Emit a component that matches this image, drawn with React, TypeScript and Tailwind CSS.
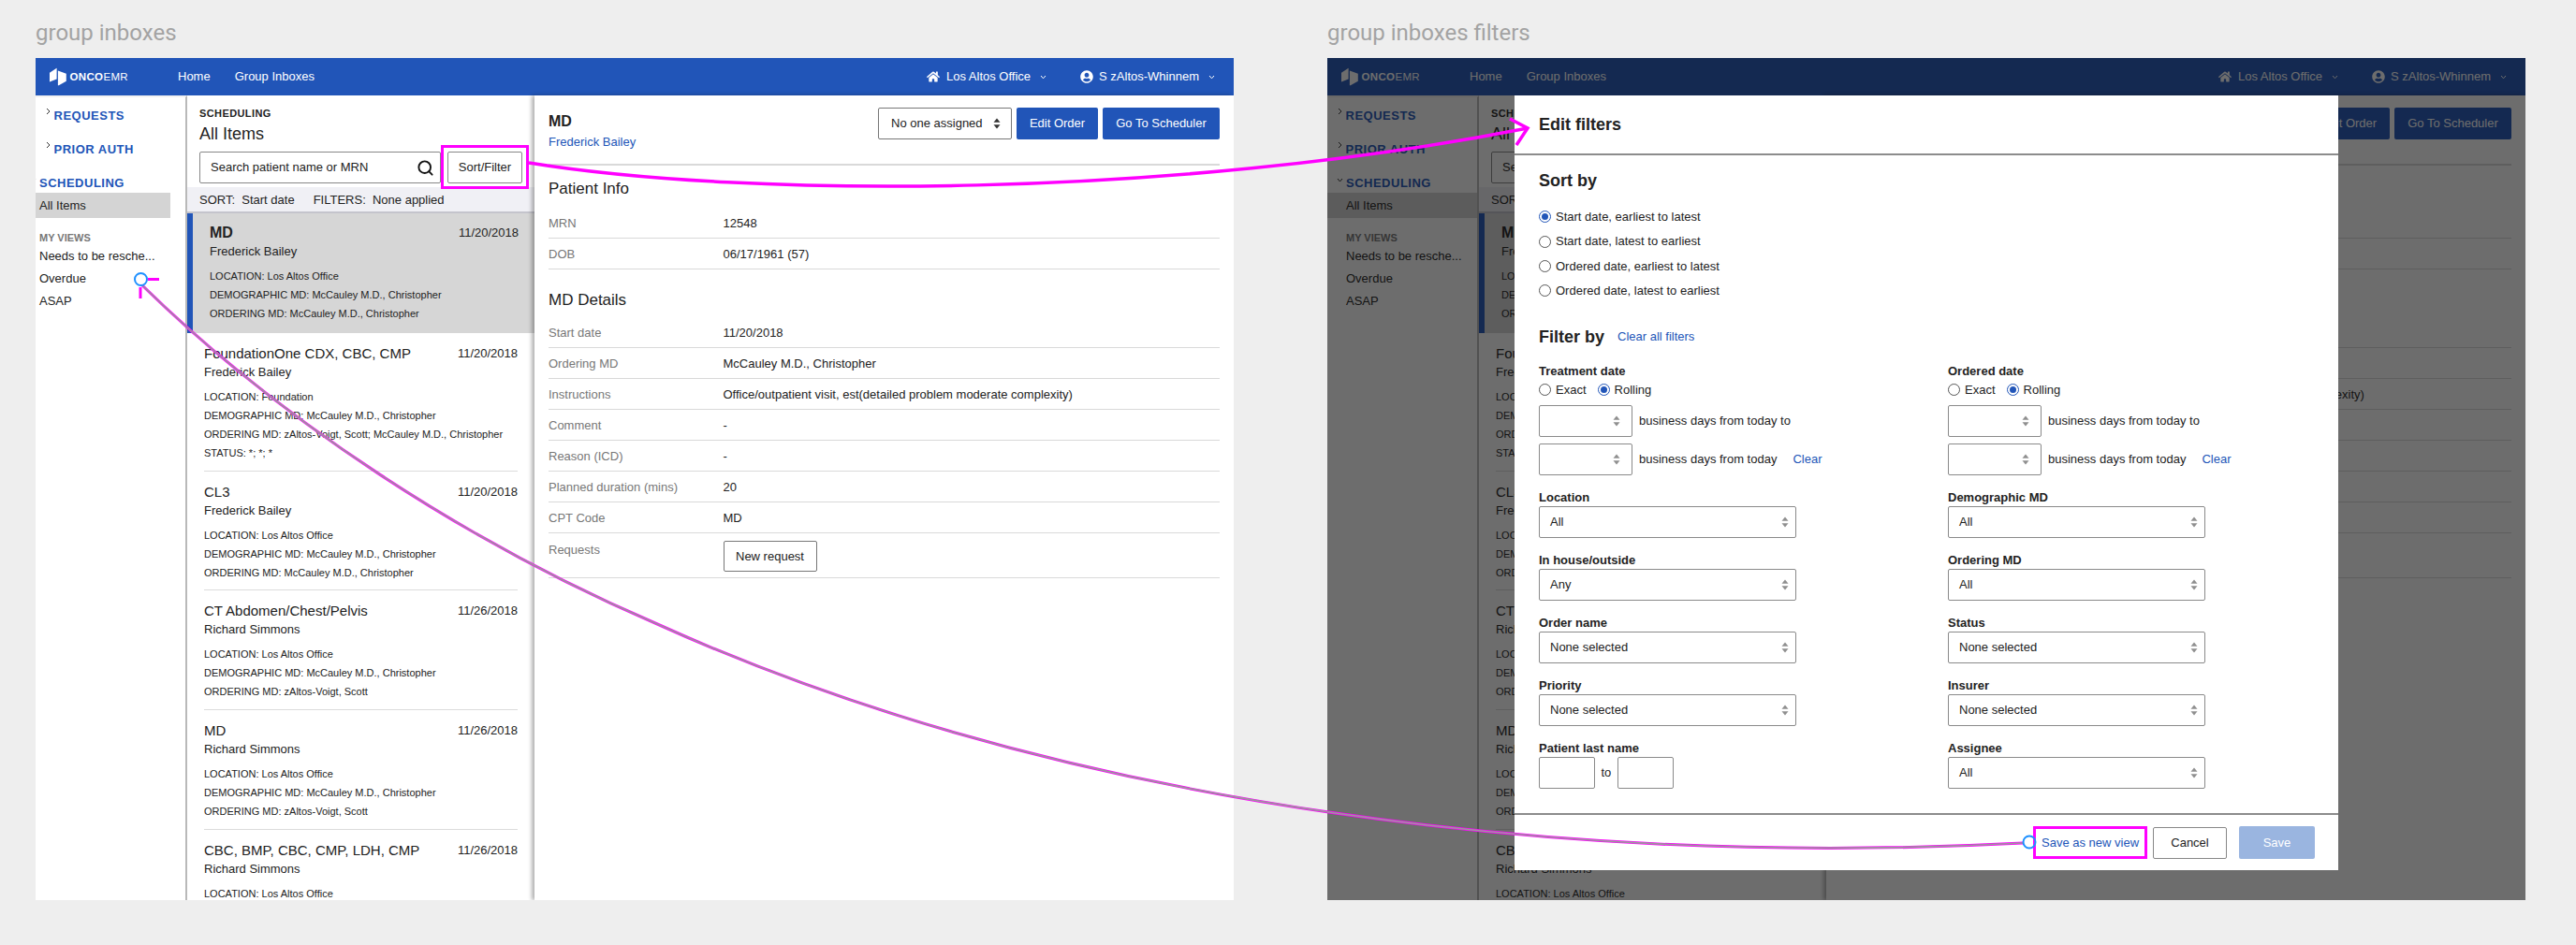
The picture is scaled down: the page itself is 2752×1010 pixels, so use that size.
import React from "react";
import { Search } from "lucide-react";
import { FaHome, FaUserCircle } from "react-icons/fa";

const FONT = "font-['Liberation_Sans',Arial,sans-serif]";

interface Order {
  title: string;
  patient: string;
  date: string;
  lines: string[];
}

const ORDERS: Order[] = [
  {
    title: "MD",
    patient: "Frederick Bailey",
    date: "11/20/2018",
    lines: ["LOCATION: Los Altos Office", "DEMOGRAPHIC MD: McCauley M.D., Christopher", "ORDERING MD: McCauley M.D., Christopher"],
  },
  {
    title: "FoundationOne CDX, CBC, CMP",
    patient: "Frederick Bailey",
    date: "11/20/2018",
    lines: ["LOCATION: Foundation", "DEMOGRAPHIC MD: McCauley M.D., Christopher", "ORDERING MD: zAltos-Voigt, Scott; McCauley M.D., Christopher", "STATUS: *; *; *"],
  },
  {
    title: "CL3",
    patient: "Frederick Bailey",
    date: "11/20/2018",
    lines: ["LOCATION: Los Altos Office", "DEMOGRAPHIC MD: McCauley M.D., Christopher", "ORDERING MD: McCauley M.D., Christopher"],
  },
  {
    title: "CT Abdomen/Chest/Pelvis",
    patient: "Richard Simmons",
    date: "11/26/2018",
    lines: ["LOCATION: Los Altos Office", "DEMOGRAPHIC MD: McCauley M.D., Christopher", "ORDERING MD: zAltos-Voigt, Scott"],
  },
  {
    title: "MD",
    patient: "Richard Simmons",
    date: "11/26/2018",
    lines: ["LOCATION: Los Altos Office", "DEMOGRAPHIC MD: McCauley M.D., Christopher", "ORDERING MD: zAltos-Voigt, Scott"],
  },
  {
    title: "CBC, BMP, CBC, CMP, LDH, CMP",
    patient: "Richard Simmons",
    date: "11/26/2018",
    lines: ["LOCATION: Los Altos Office", "DEMOGRAPHIC MD: McCauley M.D., Christopher", "ORDERING MD: zAltos-Voigt, Scott"],
  },
];

const UpDown = ({ dark = false }: { dark?: boolean }) => (
  <svg width="8" height="12" viewBox="0 0 8 12" className={dark ? "fill-[#333]" : "fill-[#8f8f8f]"}>
    <path d="M4 0.5 L7.5 4.8 H0.5 Z" />
    <path d="M4 11.5 L0.5 7.2 H7.5 Z" />
  </svg>
);

const Caret = () => (
  <svg width="7" height="5" viewBox="0 0 7 5" fill="none" stroke="currentColor" strokeWidth="1">
    <path d="M1 1 L3.5 3.8 L6 1" />
  </svg>
);

const Logo = () => (
  <svg width="18" height="20" viewBox="0 0 18 20" fill="#fff">
    <path d="M0 5.8 L7.6 0.8 V12.5 L0 15.5 Z" />
    <path d="M8.9 3.5 L17.8 6.8 V14.8 L9.8 19.2 H8.9 Z" />
  </svg>
);

const Nav = () => (
  <div className="flex h-[40px] shrink-0 items-center bg-[#2155b8] text-[13px] text-white">
    <div className="ml-[15px] flex w-[137px] items-center gap-[3.5px]">
      <Logo />
      <span className="pt-[1px] text-[11.5px] tracking-[0.35px]">
        <span className="font-bold">ONCO</span>EMR
      </span>
    </div>
    <span>Home</span>
    <span className="ml-[26px]">Group Inboxes</span>
    <div className="ml-auto flex items-center">
      <FaHome className="mr-[7px] text-[14px]" />
      <span>Los Altos Office</span>
      <span className="ml-[10px] mr-[36px]">
        <Caret />
      </span>
      <FaUserCircle className="mr-[6px] text-[14px]" />
      <span>S zAltos-Whinnem</span>
      <span className="ml-[10px] mr-[20px]">
        <Caret />
      </span>
    </div>
  </div>
);

const NavGroup = ({ label, className }: { label: string; className: string }) => (
  <div className={`relative pl-[19.5px] text-[13px] font-bold leading-[20px] tracking-[0.5px] text-[#2155b8] ${className}`}>
    <svg width="5" height="8" viewBox="0 0 5 8" fill="none" stroke="#333" strokeWidth="1" className="absolute left-[11px] top-[1px]">
      <path d="M1 1 L4 4 L1 7" />
    </svg>
    {label}
  </div>
);

const Sidebar = ({ wide }: { wide: boolean }) => {
  const pad = wide ? "pl-[20px]" : "pl-[4px]";
  return (
    <div className="w-[162px] shrink-0 border-r-2 border-[#b9b9b9] border-t-2 border-t-[#f2f2f2] text-[13px] text-[#222]">
      <NavGroup label="REQUESTS" className="mt-[10px]" />
      <NavGroup label="PRIOR AUTH" className="mt-[16px]" />
      <div className={`relative mt-[16px] ${pad} text-[13px] font-bold leading-[20px] tracking-[0.5px] text-[#2155b8]`}>
        <svg
          width="7"
          height="5"
          viewBox="0 0 7 5"
          fill="none"
          stroke="#333"
          strokeWidth="1"
          className={wide ? "absolute left-[10px] top-[4px]" : "absolute left-[-6px] top-[4px]"}
        >
          <path d="M1 1 L3.5 4 L6 1" />
        </svg>
        SCHEDULING
      </div>
      <div className={`flex h-[27px] items-center bg-[#d4d4d4] pt-[1px] ${pad} ${wide ? "w-[160px]" : "w-[144px]"}`}>All Items</div>
      <div className={`mt-[14px] ${pad} text-[11px] font-bold leading-[14px] text-[#777]`}>MY VIEWS</div>
      <div className={`mt-[3px] ${pad} leading-[20px]`}>Needs to be resche...</div>
      <div className={`mt-[4px] ${pad} leading-[20px]`}>Overdue</div>
      <div className={`mt-[4px] ${pad} leading-[20px]`}>ASAP</div>
    </div>
  );
};

const OrderRow = ({ order, selected }: { order: Order; selected: boolean }) => (
  <div className={selected ? "border-l-[6px] border-[#2155b8] bg-[#d6d6d6] pl-[18px] pr-[17px]" : "px-[18px]"}>
    <div className={selected ? "h-[128px] pt-[11px]" : "border-b border-[#dcdcdc] pb-[8.67px] pt-[12px]"}>
      <div className="flex items-center justify-between text-[#222]">
        <span className={selected ? "text-[16px] font-bold leading-[20px]" : "text-[15px] leading-[20px]"}>{order.title}</span>
        <span className="text-[13px] leading-[20px]">{order.date}</span>
      </div>
      <div className="text-[13px] leading-[20px] text-[#222]">{order.patient}</div>
      <div className="mt-[6px] text-[11px] leading-[20px] text-[#222]">
        {order.lines.map((l) => (
          <div key={l}>{l}</div>
        ))}
      </div>
    </div>
  </div>
);

const ListPanel = () => (
  <div className="flex w-[371px] shrink-0 flex-col overflow-hidden">
    <div className="pl-[13px] pr-[12px]">
      <div className="mt-[12px] text-[11px] font-bold leading-[14px] tracking-[0.4px] text-[#222]">SCHEDULING</div>
      <div className="mt-[3px] text-[18px] leading-[24px] text-[#222]">All Items</div>
      <div className="mt-[7px] flex gap-[7px]">
        <div className="flex h-[34px] w-[258px] items-center justify-between rounded-[2px] border border-[#888] pl-[11px] pr-[6px] text-[13px] text-[#222]">
          Search patient name or MRN
          <Search size={19} strokeWidth={2.4} className="text-[#111]" />
        </div>
        <button className="h-[34px] w-[80px] rounded-[2px] border border-[#888] text-[13px] text-[#222]">Sort/Filter</button>
      </div>
    </div>
    <div className="mt-[4px] flex h-[28px] shrink-0 items-center gap-[20px] border-b-2 border-[#c4c4cc] bg-[#f0f0f5] pl-[13px] pt-[2px] text-[13px] text-[#222]">
      <span>SORT:&nbsp; Start date</span>
      <span>FILTERS:&nbsp; None applied</span>
    </div>
    <div className="min-h-0 flex-1 overflow-hidden">
      {ORDERS.map((o, i) => (
        <OrderRow key={o.title + i} order={o} selected={i === 0} />
      ))}
    </div>
  </div>
);

const Row = ({ label, value }: { label: string; value: string }) => (
  <div className="flex h-[33px] items-center border-b border-[#d9d9d9] pt-[1px] text-[13px]">
    <span className="w-[186.5px] text-[#777]">{label}</span>
    <span className="text-[#222]">{value}</span>
  </div>
);

const DetailPanel = () => (
  <div className="relative flex-1 px-[15px] shadow-[-3px_0_4px_rgba(0,0,0,0.3)]">
    <div className="flex h-[75px] items-start justify-between border-b-2 border-[#d9d9d9]">
      <div>
        <div className="mt-[18px] text-[16px] font-bold leading-[20px] text-[#222]">MD</div>
        <div className="mt-[2px] text-[13px] leading-[20px] text-[#2155b8]">Frederick Bailey</div>
      </div>
      <div className="mt-[13px] flex gap-[5px] text-[13px]">
        <div className="flex h-[34px] w-[143px] items-center justify-between rounded-[2px] border border-[#777] pl-[13px] pr-[11px] text-[#222]">
          No one assigned
          <UpDown dark />
        </div>
        <button className="h-[34px] w-[87px] rounded-[2px] bg-[#2155b8] text-white">Edit Order</button>
        <button className="h-[34px] w-[125px] rounded-[2px] bg-[#2155b8] text-white">Go To Scheduler</button>
      </div>
    </div>
    <div className="pb-[10px] pt-[15px] text-[17px] leading-[20px] text-[#222]">Patient Info</div>
    <Row label="MRN" value="12548" />
    <Row label="DOB" value="06/17/1961 (57)" />
    <div className="pb-[8px] pt-[23px] text-[17px] leading-[20px] text-[#222]">MD Details</div>
    <Row label="Start date" value="11/20/2018" />
    <Row label="Ordering MD" value="McCauley M.D., Christopher" />
    <Row label="Instructions" value="Office/outpatient visit, est(detailed problem moderate complexity)" />
    <Row label="Comment" value="-" />
    <Row label="Reason (ICD)" value="-" />
    <Row label="Planned duration (mins)" value="20" />
    <Row label="CPT Code" value="MD" />
    <div className="flex h-[48px] items-start border-b border-[#d9d9d9] text-[13px]">
      <span className="w-[186.5px] pt-[8px] leading-[20px] text-[#777]">Requests</span>
      <button className="mt-[8px] h-[33px] w-[100px] rounded-[2px] border border-[#777] text-[#222]">New request</button>
    </div>
  </div>
);

const Radio = ({ on = false }: { on?: boolean }) => (
  <span className={`flex h-[13px] w-[13px] shrink-0 items-center justify-center rounded-full border ${on ? "border-[#2155b8]" : "border-[#555]"}`}>
    {on && <span className="h-[7px] w-[7px] rounded-full bg-[#2155b8]" />}
  </span>
);

const Label = ({ children }: { children: React.ReactNode }) => <div className="text-[13px] font-bold leading-[18px] text-[#222]">{children}</div>;

const DaysInput = () => (
  <span className="flex h-[33.5px] w-[100px] shrink-0 items-center justify-end rounded-[2px] border border-[#8a8a8a] pr-[12px]">
    <UpDown />
  </span>
);

const DateFilter = ({ title }: { title: string }) => (
  <div>
    <Label>{title}</Label>
    <div className="mt-[1px] flex h-[20px] items-center text-[13px] text-[#222]">
      <Radio />
      <span className="ml-[5px]">Exact</span>
      <span className="ml-[12px]">
        <Radio on />
      </span>
      <span className="ml-[5px]">Rolling</span>
    </div>
    <div className="mt-[6.5px] flex items-center gap-[7px] text-[13px] text-[#222]">
      <DaysInput />
      business days from today to
    </div>
    <div className="mt-[7.5px] flex items-center text-[13px] text-[#222]">
      <DaysInput />
      <span className="ml-[7px]">business days from today</span>
      <span className="ml-[17px] text-[#2155b8]">Clear</span>
    </div>
  </div>
);

const SelectField = ({ label, value }: { label: string; value: string }) => (
  <div className="mt-[15.5px]">
    <Label>{label}</Label>
    <div className="flex h-[33.5px] w-[275px] items-center justify-between rounded-[2px] border border-[#8a8a8a] pl-[11px] pr-[7px] text-[13px] text-[#222]">
      {value}
      <UpDown />
    </div>
  </div>
);

const Modal = () => (
  <div className="absolute left-[200px] top-[40px] flex h-[828px] w-[880px] flex-col bg-white text-[#222]">
    <div className="flex h-[64px] shrink-0 items-center border-b-2 border-[#8c8c8c] pl-[26px] text-[18px] font-bold">Edit filters</div>
    <div className="min-h-0 flex-1 pl-[26px]">
      <div className="mt-[15px] text-[18px] font-bold leading-[24px]">Sort by</div>
      <div className="mt-[13.5px] text-[13px]">
        {["Start date, earliest to latest", "Start date, latest to earliest", "Ordered date, earliest to latest", "Ordered date, latest to earliest"].map((s, i) => (
          <div key={s} className="flex h-[26.4px] items-center gap-[5px]">
            <Radio on={i === 0} />
            {s}
          </div>
        ))}
      </div>
      <div className="mt-[24px] flex items-center gap-[14px] leading-[24px]">
        <span className="text-[18px] font-bold">Filter by</span>
        <span className="text-[13px] text-[#2155b8]">Clear all filters</span>
      </div>
      <div className="mt-[15.5px] grid grid-cols-[437px_1fr]">
        <div>
          <DateFilter title="Treatment date" />
          <SelectField label="Location" value="All" />
          <SelectField label="In house/outside" value="Any" />
          <SelectField label="Order name" value="None selected" />
          <SelectField label="Priority" value="None selected" />
          <div className="mt-[15.5px]">
            <Label>Patient last name</Label>
            <div className="flex items-center text-[13px]">
              <span className="h-[33.5px] w-[60px] rounded-[2px] border border-[#8a8a8a]" />
              <span className="mx-[6.5px]">to</span>
              <span className="h-[33.5px] w-[60px] rounded-[2px] border border-[#8a8a8a]" />
            </div>
          </div>
        </div>
        <div>
          <DateFilter title="Ordered date" />
          <SelectField label="Demographic MD" value="All" />
          <SelectField label="Ordering MD" value="All" />
          <SelectField label="Status" value="None selected" />
          <SelectField label="Insurer" value="None selected" />
          <SelectField label="Assignee" value="All" />
        </div>
      </div>
    </div>
    <div className="flex h-[61px] shrink-0 items-center justify-end border-t-2 border-[#8c8c8c] pr-[25px] text-[13px]">
      <button className="h-[35px] w-[122px] border-[3px] border-[#ff00ff] pl-[6px] text-left text-[#2155b8]">Save as new view</button>
      <button className="ml-[6px] h-[34px] w-[79px] rounded-[2px] border border-[#888]">Cancel</button>
      <button className="ml-[13px] h-[35px] w-[81px] rounded-[2px] bg-[#9ab5e0] text-white">Save</button>
    </div>
  </div>
);

const Frame = ({ title, filters }: { title: string; filters?: boolean }) => (
  <div className="w-[1280px]">
    <div className="flex h-[62px] items-center pt-[8px] text-[24px] leading-none text-[#a3a3a3] font-['Roboto',sans-serif]">{title}</div>
    <div className="relative flex h-[900px] flex-col overflow-hidden bg-white">
      <Nav />
      <div className="flex min-h-0 flex-1">
        <Sidebar wide={!!filters} />
        <ListPanel />
        <DetailPanel />
      </div>
      {filters && <div className="absolute inset-0 bg-[#0b0b0b]/60" />}
      {filters && <Modal />}
    </div>
  </div>
);

// pink annotation arrows that run across both mockups
const Annotations = () => (
  <svg width="2752" height="1010" viewBox="0 0 2752 1010" fill="none" className="pointer-events-none absolute left-0 top-0">
    <rect x="472.5" y="156.5" width="91" height="44" stroke="#ff00ff" strokeWidth="3" />
    <path d="M565 174 C800 212 1250 212 1632 137" stroke="#ff00ff" strokeWidth="3.5" />
    <path d="M1613 127 L1632 137 L1620 155" stroke="#ff00ff" strokeWidth="3.5" />
    <path d="M152 305 C300 450 500 580 700 666 C1150 870 1700 925 2161 901" stroke="#ff00ff" strokeWidth="3" />
    <path d="M152 305 C300 450 500 580 700 666 C1150 870 1700 925 2161 901" stroke="#9a9a9a" strokeWidth="1.6" />
    <path d="M158 298.5 H170 M150 307 V319" stroke="#ff00ff" strokeWidth="3" />
    <circle cx="150.5" cy="298.5" r="6.5" stroke="#1e90ff" strokeWidth="2" />
    <circle cx="2168" cy="900" r="6.5" stroke="#1e90ff" strokeWidth="2" />
  </svg>
);

export default function App() {
  return (
    <div className={`relative flex h-[1010px] w-[2752px] gap-[100px] overflow-hidden bg-[#eeeeee] pl-[38px] ${FONT}`}>
      <Frame title="group inboxes" />
      <Frame title="group inboxes filters" filters />
      <Annotations />
    </div>
  );
}
